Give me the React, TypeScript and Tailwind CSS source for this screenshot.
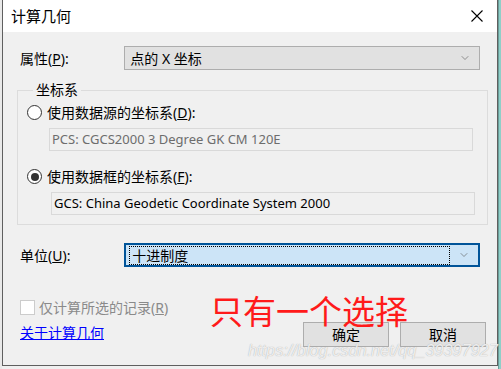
import { ChevronDown } from 'lucide-react'

const ui = { fontFamily: '"Noto Sans", "Noto Sans CJK SC", sans-serif' }

function Radio({ checked }: { checked?: boolean }) {
  return (
    <span className="w-[15px] h-[15px] rounded-full border border-[#333333] bg-white flex items-center justify-center shrink-0">
      {checked && <span className="w-[8px] h-[8px] rounded-full bg-[#333333]" />}
    </span>
  )
}

function Select({ value, focused }: { value: string; focused?: boolean }) {
  return (
    <div
      className={`w-[361px] h-[24px] flex items-center pl-[3px] pr-[8px] ${
        focused ? 'bg-[#cce4f7] border-2 border-[#005499]' : 'bg-[#e1e1e1] border border-[#adadad]'
      }`}
    >
      <div
        className={`flex-1 h-[19px] flex items-center pl-[2px] text-[14px] text-black ${
          focused ? 'border border-dotted border-black mr-[8px]' : ''
        }`}
      >
        {value}
      </div>
      <ChevronDown className="w-[12px] h-[12px] text-[#555555]" strokeWidth={1.2} />
    </div>
  )
}

export default function App() {
  return (
    <div className="w-[501px] h-[369px] bg-[#f0f0f0] flex overflow-hidden relative" style={ui}>
      {/* 뒤쪽 엑셀 칸 */}
      <div className="w-[2px] h-full bg-[#e9e9e9]" />
      <div className="w-[496px] h-[366px] border-l border-r border-b border-[#5f5f5f] flex flex-col">
        {/* 제목줄 */}
        <div className="h-[32px] bg-white flex items-center justify-between pl-[8px] pr-[14px]">
          <span className="text-[15px] text-black">计算几何</span>
          <svg width="12" height="12" viewBox="0 0 12 12">
            <path d="M0.5 0.5 L11.5 11.5 M11.5 0.5 L0.5 11.5" stroke="#000" strokeWidth="1.1" />
          </svg>
        </div>

        <div className="flex-1 bg-[#f0f0f0] flex flex-col px-[17px] relative text-[14px]">
          <div className="flex items-center mt-[14px]">
            <span className="w-[106px]">
              属性(<span className="underline">P</span>):
            </span>
            <Select value="点的 X 坐标" />
          </div>

          {/* 좌표계 그룹 */}
          <fieldset className="mt-[12px] border border-[#dcdcdc] w-[471px] h-[143px] pl-[9px] pt-[4px] ml-[-3px]">
            <legend className="px-[3px] ml-[6px] leading-[16px]">坐标系</legend>
            <div className="flex items-center gap-[5px]">
              <Radio />
              <span>
                使用数据源的坐标系(<span className="underline">D</span>):
              </span>
            </div>
            <div className="ml-[22px] mt-[5px] w-[424px] h-[23px] border border-[#d9d9d9] flex items-center pl-[2px] text-[13px] text-[#6d6d6d]">
              PCS: CGCS2000 3 Degree GK CM 120E
            </div>
            <div className="flex items-center gap-[5px] mt-[15px]">
              <Radio checked />
              <span>
                使用数据框的坐标系(<span className="underline">F</span>):
              </span>
            </div>
            <div className="ml-[24px] mt-[5px] w-[424px] h-[23px] border border-[#d9d9d9] flex items-center pl-[2px] text-[13px] text-black">
              GCS: China Geodetic Coordinate System 2000
            </div>
          </fieldset>

          <div className="flex items-center mt-[18px]">
            <span className="w-[106px]">
              单位(<span className="underline">U</span>):
            </span>
            <Select value="十进制度" focused />
          </div>

          <div className="flex items-center gap-[4px] mt-[30px] text-[#8a8a8a]">
            <span className="w-[15px] h-[15px] border border-[#cccccc] bg-white" />
            <span>
              仅计算所选的记录(<span className="underline">R</span>)
            </span>
          </div>

          <div className="flex items-start justify-between mt-[3px]">
            <a className="text-[#0000ff] underline mt-[1px]">关于计算几何</a>
            <div className="flex gap-[11px] mr-[-6px] mt-[1px]">
              <button className="w-[86px] h-[25px] bg-[#e1e1e1] border border-[#adadad]">确定</button>
              <button className="w-[86px] h-[25px] bg-[#e1e1e1] border border-[#adadad]">取消</button>
            </div>
          </div>

          {/* 덧그린 빨간 글씨 */}
          <div className="absolute left-[207px] top-[262px] text-[33px] leading-[36px] text-[#ff1a1a]">只有一个选择</div>
          {/* 워터마크 */}
          <div
            className="absolute left-[245px] top-[306px] text-[16.3px] italic text-white/80"
            style={{ fontFamily: '"Liberation Sans", sans-serif', textShadow: '0 0 1px #9a9a9a' }}
          >
            https://blog.csdn.net/qq_39397927
          </div>
        </div>
      </div>
      <div className="flex-1 h-full bg-[#8fcfc8] border-l border-[#6a9c98]" />
    </div>
  )
}
